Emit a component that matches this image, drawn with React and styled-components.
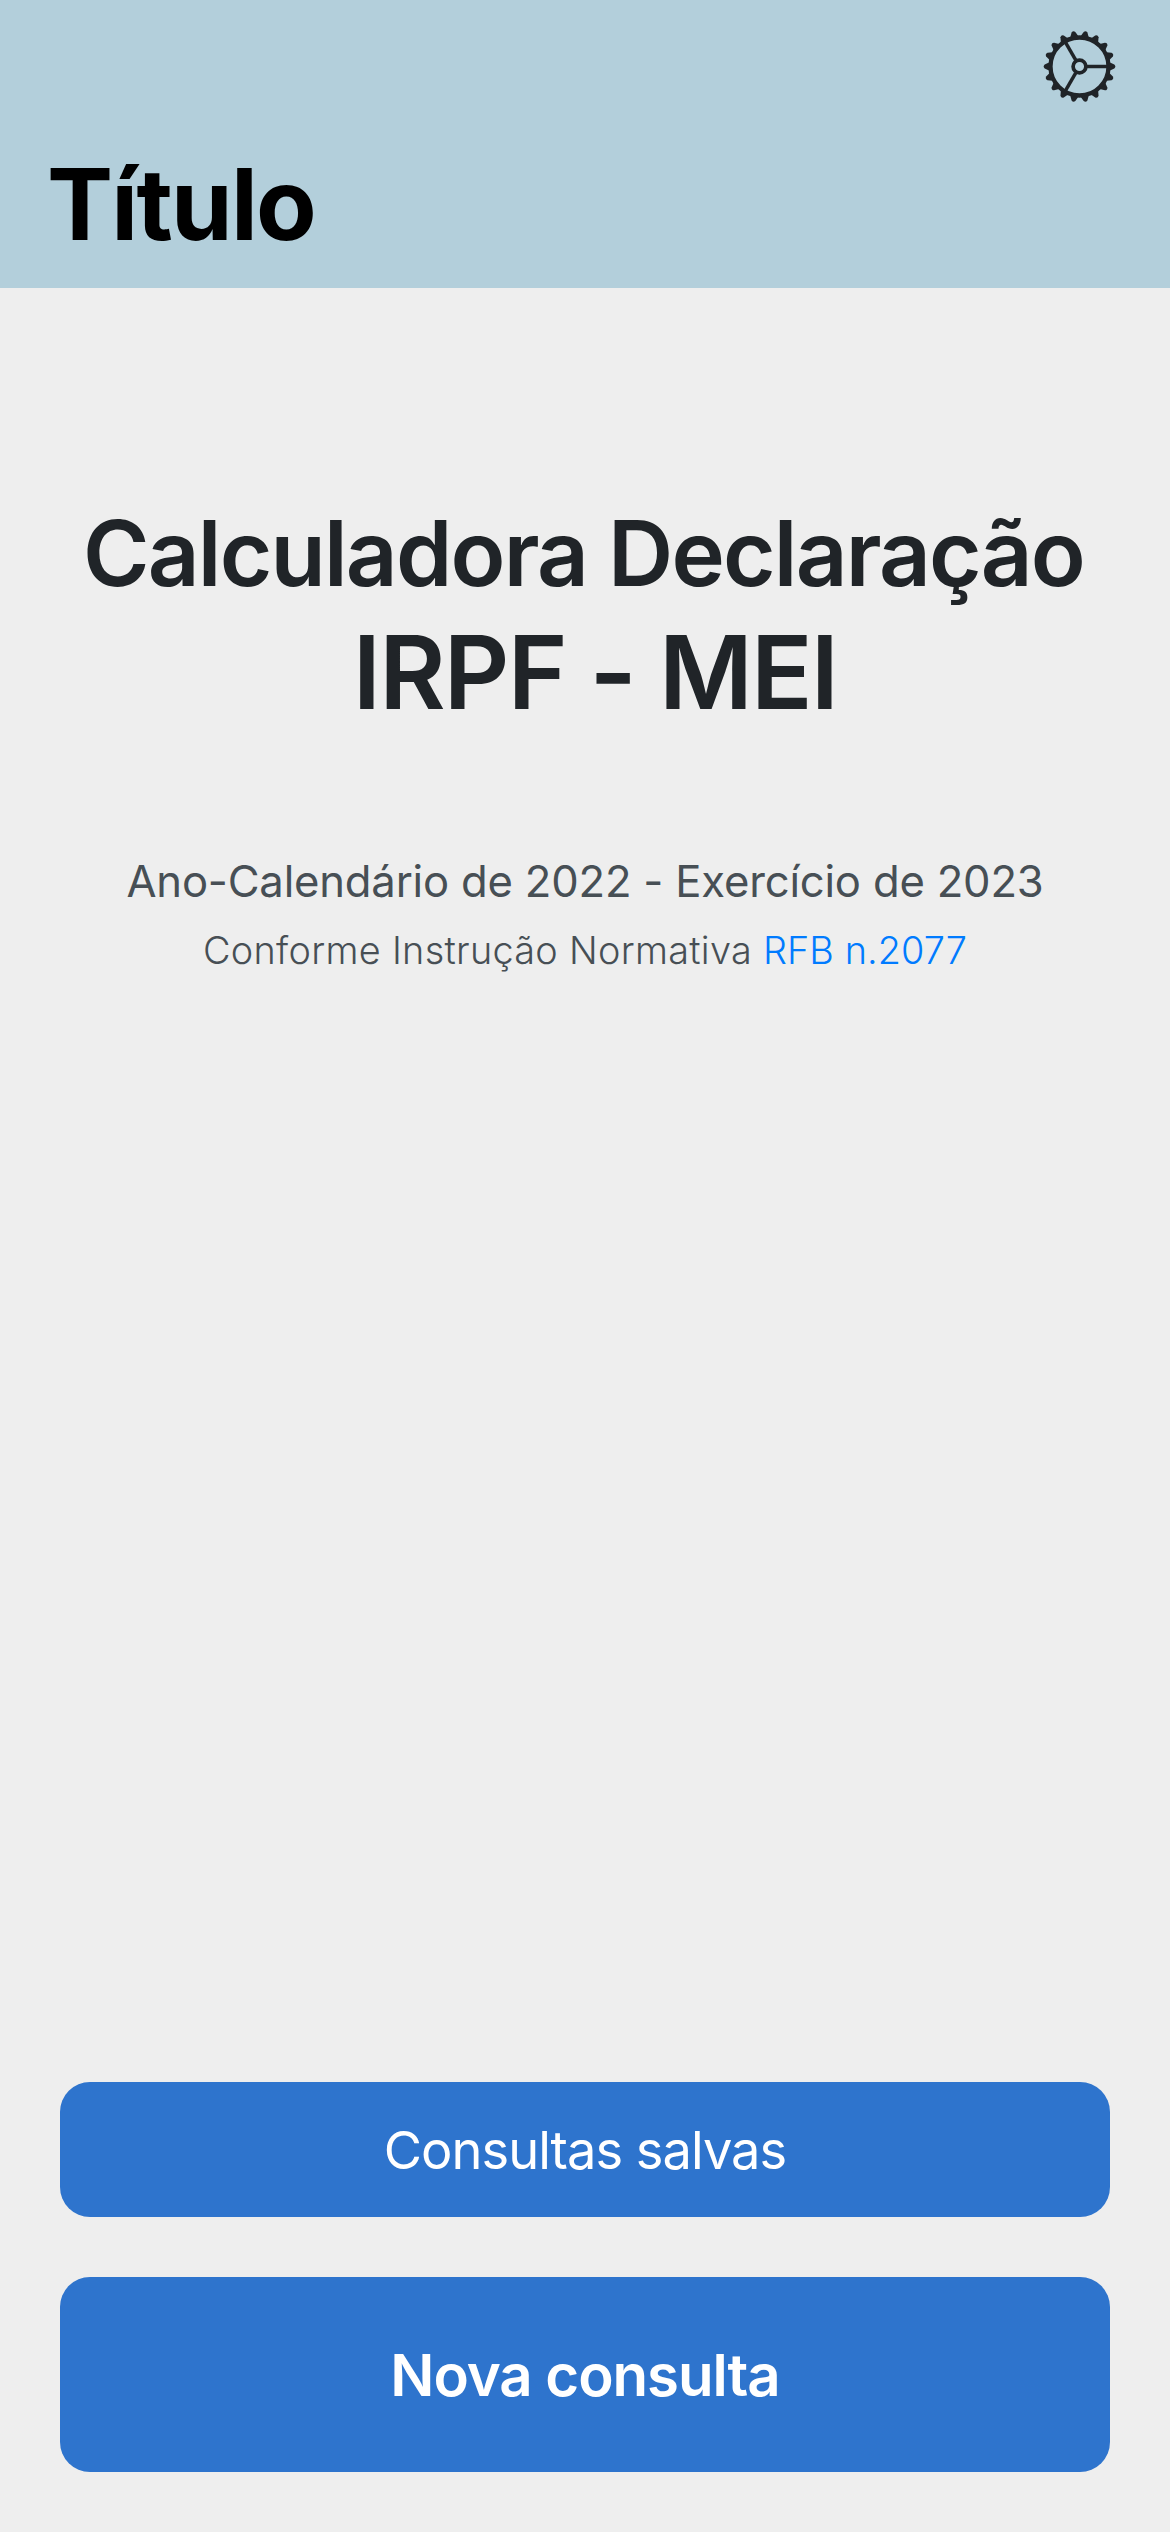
import React from "react";
import styled, { createGlobalStyle } from "styled-components";

const GlobalStyle = createGlobalStyle`
  *, *::before, *::after { box-sizing: border-box; }
  body {
    margin: 0;
    background: #eeeeee;
    font-family: Inter, "Liberation Sans", sans-serif;
  }
`;

const Screen = styled.div`
  display: flex;
  flex-direction: column;
  width: 1170px;
  height: 2532px;
  background: #eeeeee;
`;

const Header = styled.header`
  display: flex;
  flex-direction: column;
  justify-content: space-between;
  height: 288px;
  padding: 30px 54px 24px 47px;
  background: #b3cfdb;
`;

const Toolbar = styled.div`
  display: flex;
  justify-content: flex-end;
`;

const IconButton = styled.button`
  display: flex;
  padding: 0;
  border: 0;
  background: none;
  color: #202428;
`;

const PageTitle = styled.h1`
  margin: 0;
  color: #000000;
  font-size: 99px;
  font-weight: 700;
  line-height: 120px;
  letter-spacing: -1.72px;
`;

const Main = styled.main`
  display: flex;
  flex: 1;
  flex-direction: column;
  justify-content: space-between;
  padding: 210px 60px 60px;
`;

const Intro = styled.section`
  display: flex;
  flex-direction: column;
  align-items: center;
  white-space: nowrap;
`;

const Heading = styled.h2`
  display: flex;
  flex-direction: column;
  align-items: center;
  margin: 0 0 121px;
  color: #202428;
  font-weight: 600;
`;

const HeadingTop = styled.span`
  padding-right: 3px;
  font-size: 90.3px;
  line-height: 112px;
  letter-spacing: -1.78px;
`;

const HeadingBottom = styled.span`
  padding-left: 20px;
  font-size: 101.8px;
  line-height: 124px;
  letter-spacing: -1.82px;
`;

const Period = styled.p`
  margin: 0 0 18px;
  color: #474f55;
  font-size: 43.6px;
  line-height: 54px;
  letter-spacing: -0.185px;
`;

const Legal = styled.p`
  margin: 0;
  color: #474f55;
  font-size: 37.8px;
  font-weight: 300;
  line-height: 46px;
  letter-spacing: 0.3px;
`;

const LegalLink = styled.a`
  color: #007bff;
  letter-spacing: 0.08px;
  text-decoration: none;
`;

const Actions = styled.div`
  display: flex;
  flex-direction: column;
  gap: 60px;
`;

const ActionButton = styled.button`
  height: ${(p) => (p.$primary ? 195 : 135)}px;
  padding: 0;
  border: 0;
  border-radius: 30px;
  background: #2e74cd;
  color: #ffffff;
  font-family: inherit;
  font-size: ${(p) => (p.$primary ? 58.2 : 52.4)}px;
  font-weight: ${(p) => (p.$primary ? 600 : 400)};
  letter-spacing: ${(p) => (p.$primary ? -1.06 : -0.99)}px;
`;

const TEETH = Array.from({ length: 18 }, (_, i) => i * 20);
const SPOKES = [0, 120, 240];

function GearIcon() {
  return (
    <svg width="73" height="73" viewBox="-36.5 -36.5 73 73" fill="none" stroke="currentColor" aria-hidden="true">
      <circle r="29" strokeWidth="4.3" />
      <circle r="6.4" strokeWidth="3.7" />
      {SPOKES.map((angle) => (
        <path key={angle} d="M7.5 0H28" strokeWidth="3.5" transform={`rotate(${angle})`} />
      ))}
      {TEETH.map((angle) => (
        <path
          key={angle}
          d="M30 -4.2L34.8 -1.9Q36.8 0 34.8 1.9L30 4.2Z"
          fill="currentColor"
          stroke="none"
          transform={`rotate(${angle})`}
        />
      ))}
    </svg>
  );
}

export default function App() {
  return (
    <>
      <GlobalStyle />
      <Screen>
        <Header>
          <Toolbar>
            <IconButton aria-label="Ajustes">
              <GearIcon />
            </IconButton>
          </Toolbar>
          <PageTitle>Título</PageTitle>
        </Header>
        <Main>
          <Intro>
            <Heading>
              <HeadingTop>Calculadora Declaração</HeadingTop>
              <HeadingBottom>IRPF - MEI</HeadingBottom>
            </Heading>
            <Period>Ano-Calendário de 2022 - Exercício de 2023</Period>
            <Legal>
              Conforme Instrução Normativa <LegalLink>RFB n.2077</LegalLink>
            </Legal>
          </Intro>
          <Actions>
            <ActionButton>Consultas salvas</ActionButton>
            <ActionButton $primary>Nova consulta</ActionButton>
          </Actions>
        </Main>
      </Screen>
    </>
  );
}
